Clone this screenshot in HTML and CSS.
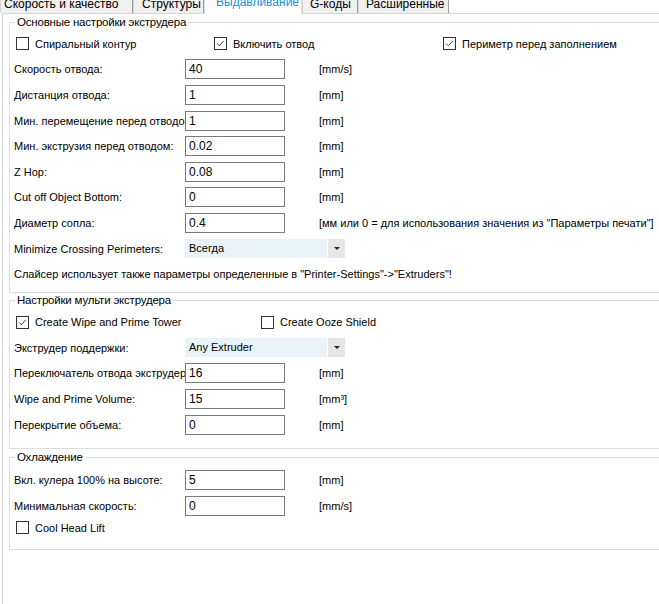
FILE: index.html
```html
<!DOCTYPE html>
<html lang="ru">
<head>
  <meta charset="UTF-8" />
  <title>Выдавливание</title>
  <link rel="stylesheet" href="styles.css">
</head>
<body>
  <div class="tabs">
    <div class="tab t1">Скорость и качество</div>
    <div class="tab t2">Структуры</div>
    <div class="tab t3 active">Выдавливание</div>
    <div class="tab t4">G-коды</div>
    <div class="tab t5">Расширенные</div>
  </div>

  <div class="page">
    <!-- Основные -->
    <fieldset class="group g-main">
      <legend>Основные настройки экструдера</legend>
      <div class="checks">
        <label class="check c-spiral"><span class="box"></span>Спиральный контур</label>
        <label class="check c-retract"><span class="box on"><svg viewBox="0 0 13 13"><path d="M2.5 6.5 L5.2 9.2 L10.5 3.3"/></svg></span>Включить отвод</label>
        <label class="check"><span class="box on"><svg viewBox="0 0 13 13"><path d="M2.5 6.5 L5.2 9.2 L10.5 3.3"/></svg></span>Периметр перед заполнением</label>
      </div>
      <div class="field"><span class="lbl">Скорость отвода:</span><span class="input">40</span><span class="unit">[mm/s]</span></div>
      <div class="field"><span class="lbl">Дистанция отвода:</span><span class="input">1</span><span class="unit">[mm]</span></div>
      <div class="field"><span class="lbl">Мин. перемещение перед отводом:</span><span class="input">1</span><span class="unit">[mm]</span></div>
      <div class="field"><span class="lbl">Мин. экструзия перед отводом:</span><span class="input">0.02</span><span class="unit">[mm]</span></div>
      <div class="field"><span class="lbl">Z Hop:</span><span class="input">0.08</span><span class="unit">[mm]</span></div>
      <div class="field"><span class="lbl">Cut off Object Bottom:</span><span class="input">0</span><span class="unit">[mm]</span></div>
      <div class="field"><span class="lbl">Диаметр сопла:</span><span class="input">0.4</span><span class="unit">[мм или 0 = для использования значения из "Параметры печати"]</span></div>
      <div class="field"><span class="lbl">Minimize Crossing Perimeters:</span><span class="combo"><span class="combo-text">Всегда</span><span class="combo-btn"></span></span></div>
      <div class="note">Слайсер использует также параметры определенные в "Printer-Settings"-&gt;"Extruders"!</div>
    </fieldset>

    <!-- Мульти экструдер -->
    <fieldset class="group g-multi">
      <legend>Настройки мульти экструдера</legend>
      <div class="checks">
        <label class="check c-tower"><span class="box on"><svg viewBox="0 0 13 13"><path d="M2.5 6.5 L5.2 9.2 L10.5 3.3"/></svg></span>Create Wipe and Prime Tower</label>
        <label class="check"><span class="box"></span>Create Ooze Shield</label>
      </div>
      <div class="field"><span class="lbl">Экструдер поддержки:</span><span class="combo"><span class="combo-text">Any Extruder</span><span class="combo-btn"></span></span></div>
      <div class="field"><span class="lbl">Переключатель отвода экструдера:</span><span class="input">16</span><span class="unit">[mm]</span></div>
      <div class="field"><span class="lbl">Wipe and Prime Volume:</span><span class="input">15</span><span class="unit">[mm³]</span></div>
      <div class="field"><span class="lbl">Перекрытие объема:</span><span class="input">0</span><span class="unit">[mm]</span></div>
    </fieldset>

    <!-- Охлаждение -->
    <fieldset class="group g-cool">
      <legend>Охлаждение</legend>
      <div class="field"><span class="lbl">Вкл. кулера 100% на высоте:</span><span class="input">5</span><span class="unit">[mm]</span></div>
      <div class="field"><span class="lbl">Минимальная скорость:</span><span class="input">0</span><span class="unit">[mm/s]</span></div>
      <div class="checks short">
        <label class="check"><span class="box"></span>Cool Head Lift</label>
      </div>
    </fieldset>
  </div>
</body>
</html>
```

FILE: styles.css
```css
* { box-sizing: border-box; }
html, body { height: 100%; }
body {
  margin: 0;
  background: #fff;
  color: #000;
  font-family: "Liberation Sans", Arial, sans-serif;
  font-size: 11px;
  overflow: hidden;
  width: 700px;
}

/* tab strip */
.tabs {
  display: flex;
  align-items: flex-end;
  height: 13px;
  position: relative;
  z-index: 2;
}
.tab {
  height: 20px;
  line-height: 12px;
  padding: 4px 0 0 6px;
  background: #f0f0f0;
  border: 1px solid #d4d4d4;
  border-right-color: #9c9c9c;
  border-bottom: none;
  font-size: 12px;
  white-space: nowrap;
}
.t1 { width: 133px; padding-left: 3px; }
.t2 { width: 71px; padding-left: 8px; }
.t3 { width: 98px; }
.t4 { width: 56px; padding-left: 7px; }
.t5 { width: 91px; padding-left: 7px; }
.tab.active {
  height: 22px;
  margin-bottom: -1px;
  padding-top: 3px;
  background: #fff;
  color: #1a94d6;
  border-color: #d9d9d9;
  padding-left: 11px;
}

.page {
  margin-left: 2px;
  border-top: 1px solid #d6d6d6;
  border-left: 1px solid #d9d9d9;
  padding: 1px 0 0 6px;
  height: calc(100% - 13px);
}

/* group boxes */
.group {
  margin: 0;
  border: 1px solid #dcdcdc;
  padding: 0 4px;
  min-width: 0;
}
.group legend {
  padding: 0 2px;
  margin-left: 1px;
  line-height: 14px;
  font-size: 11.5px;
  letter-spacing: -0.2px;
}
.g-main { padding-top: 2px; padding-bottom: 4px; }
.g-multi { margin-top: 0; padding-top: 2px; padding-bottom: 11px; }
.g-cool { margin-top: 1px; padding-top: 3px; padding-bottom: 12px; }

/* checkboxes */
.checks {
  display: flex;
  align-items: center;
  height: 25.6px;
  padding-left: 2px;
}
.checks.short { height: 18px; }
.check {
  display: flex;
  align-items: center;
  gap: 6px;
  white-space: nowrap;
  font-size: 11px;
}
.c-spiral { width: 198px; }
.c-retract { width: 229px; }
.c-tower { width: 245px; }
.box {
  width: 13px;
  height: 13px;
  border: 1px solid #333;
  background: #fff;
  display: flex;
}
.box svg {
  width: 11px;
  height: 11px;
}
.box svg path {
  fill: none;
  stroke: #333;
  stroke-width: 1.1;
}

/* label / value rows */
.field {
  display: flex;
  align-items: center;
  height: 25.6px;
}
.lbl {
  width: 171px;
  overflow: hidden;
  white-space: nowrap;
}
.input {
  width: 100px;
  height: 20px;
  border: 1px solid #7a7a7a;
  padding: 0 3px;
  line-height: 18px;
  font-size: 12px;
}
.unit {
  margin-left: 34px;
  white-space: nowrap;
}

.combo {
  display: flex;
  width: 160px;
  height: 19px;
  font-size: 11px;
}
.combo-text {
  flex: 1;
  background: #eaf3f7;
  padding-left: 4px;
  line-height: 19px;
}
.combo-btn {
  width: 17px;
  margin-left: 1px;
  background: #e6e6e6;
  position: relative;
}
.combo-btn::after {
  content: "";
  position: absolute;
  left: 6px;
  top: 8px;
  border-left: 3px solid transparent;
  border-right: 3px solid transparent;
  border-top: 3px solid #222;
}

.note {
  height: 27px;
  line-height: 27px;
  white-space: nowrap;
}
```
